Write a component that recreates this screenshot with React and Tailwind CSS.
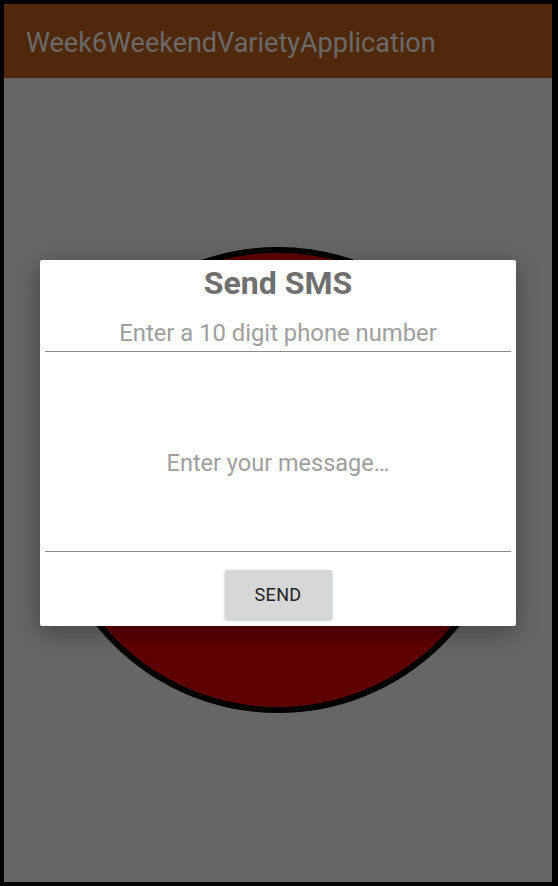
import React from 'react';

const App = () => {
    return (
        <div className="w-[558px] h-[886px] bg-black pt-[4px] pl-[4px] pr-[6px] pb-[4px]" style={{ fontFamily: 'Roboto, "Noto Sans", sans-serif' }}>
            <div className="relative w-full h-full flex flex-col bg-[#666666]">
                {/* App bar (dimmed) */}
                <div className="h-[74px] shrink-0 bg-[#50290c] flex items-center pl-[22px]">
                    <span className="text-[27px] text-[#6a6a6a] leading-none pt-[4px]">Week6WeekendVarietyApplication</span>
                </div>

                {/* Page content behind the dialog */}
                <div className="flex-1 flex items-center justify-center">
                    <div className="w-[466px] h-[466px] rounded-full bg-[#5f0000] border-[6px] border-black"></div>
                </div>

                {/* Dialog */}
                <div className="absolute inset-0 flex items-center justify-center">
                    <div className="w-[476px] h-[366px] bg-white rounded-[2px] shadow-[0_6px_24px_rgba(0,0,0,0.35)] flex flex-col px-[5px] pt-[4px]">
                        <h1 className="text-[32px] leading-[38px] font-bold text-[#6f6f6f] text-center">Send SMS</h1>
                        <div className="h-[50px] flex items-end justify-center pb-[4px] border-b border-[#8a8a8a]">
                            <span className="text-[23.8px] leading-[28px] text-[#9e9e9e]">Enter a 10 digit phone number</span>
                        </div>
                        <div className="h-[200px] flex items-start justify-center pt-[97px] border-b border-[#8a8a8a]">
                            <span className="text-[23.5px] leading-[28px] text-[#9e9e9e]">Enter your message…</span>
                        </div>
                        <div className="flex justify-center mt-[18px]">
                            <button className="w-[107px] h-[49px] bg-[#d6d7d7] rounded-[2px] shadow-[0_1px_3px_rgba(0,0,0,0.3)] text-[18px] font-normal text-[#222222] tracking-[0.3px]">
                                SEND
                            </button>
                        </div>
                    </div>
                </div>
            </div>
        </div>
    );
};

export default App;
